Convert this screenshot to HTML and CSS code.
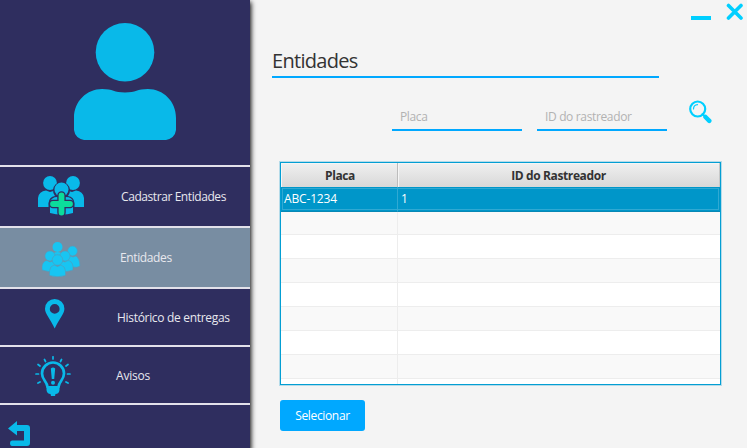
FILE: index.html
```html
<!DOCTYPE html>
<html lang="pt-BR">
<head>
<meta charset="utf-8">
<title>Entidades</title>
<link rel="stylesheet" href="styles.css">
</head>
<body>
<div class="app">
  <aside class="sidebar">
    <div class="profile">
      <svg width="102" height="118" viewBox="0 0 102 118"><circle cx="51" cy="29.3" r="29.3"/><path d="M0 95C0 78 13 66 28 66C39 66 40 69.500 51 69.500C62 69.500 63 66 74 66C89 66 102 78 102 95V107Q101 115 92 117H10Q1 115 0 107Z"/></svg>
    </div>
    <nav class="menu">
      <a class="item add">
        <svg class="icon" width="48" height="40" viewBox="0 0 48 40">
          <circle cx="12" cy="7" r="6.900"/><circle cx="35" cy="7" r="6.900"/>
          <path d="M0 31V22Q1 15 8 14.500L12 16L17 14.500L20 31ZM46 31V22Q45 15 38 14.500L34 16L29 14.500L26 31Z"/>
          <path class="cut" d="M10.500 40V27Q11 21 17 20A8.500 8.500 0 1 1 30 20Q36 21 36.500 27V40Z"/>
          <circle cx="23.500" cy="13.500" r="7"/>
          <path d="M12 32V26Q14 21 19 21L23.500 23L28 21Q34 21 35 26V32L35 37Q24 40 12 37Z"/>
          <path class="cutline" d="M23.500 19.500V36.500M15 28H32"/>
          <path class="plus" d="M23.500 19.500V36.500M15 28H32"/>
        </svg><span>Cadastrar Entidades</span>
      </a>
      <a class="item people">
        <svg class="icon" width="39" height="35" viewBox="0 0 39 35">
          <circle cx="15.500" cy="5" r="5"/><path d="M10 12Q15.500 8 21 12V18H10Z"/>
          <g class="edge"><circle cx="30.500" cy="9" r="4.900"/><path d="M23 25V18Q24 14 28 14L31 15L34 14Q37.500 16 38 24Q35 26 31 25Z"/>
          <circle cx="8" cy="14" r="5.100"/><circle cx="23" cy="14" r="5.100"/>
          <path d="M0 28V24Q1 19 5 18.500L8 20L12 18.500L16 29Q8 31 0 28ZM31 28V24Q30 19 26 18.500L23 20L19 18.500L16 29Q24 31 31 28Z"/>
          <circle cx="15.500" cy="18" r="5.300"/><path d="M7.500 33.500V29Q8 24 12 23L15.500 24.500L19 23Q23 24 23.500 29V33.500Q15.500 36 7.500 33.500Z"/></g>
        </svg><span>Entidades</span>
      </a>
      <a class="item history">
        <svg class="icon" width="20" height="30" viewBox="0 0 20 30"><path fill-rule="evenodd" d="M9.700 0A9.700 9.700 0 0 1 19.400 9.700C19.400 15 14 20 9.700 29.500C5.500 20 0 15 0 9.700A9.700 9.700 0 0 1 9.700 0ZM9.700 5A4.900 4.900 0 1 0 9.700 14.800A4.900 4.900 0 1 0 9.700 5Z"/></svg><span>Histórico de entregas</span>
      </a>
      <a class="item alerts">
        <svg class="icon" width="36" height="40" viewBox="0 0 36 40">
          <path class="stroke bulb" d="M12.500 31C12 25 7 24 7 17.500A11 11 0 0 1 29 17.500C29 24 24 25 23.500 31"/>
          <path d="M11.500 30H24.500V34Q24 38 20.500 38L20 40H16L15.500 38Q12 38 11.500 34ZM15.800 12.500Q18 10.500 20.200 12.500L19.200 23H16.800Z"/><circle cx="18" cy="26.800" r="2"/>
          <path class="stroke ray" d="M18 0.800V3M9.500 3.500L10.500 5.500M26.500 3.500L25.500 5.500M3 8.500L5 10M33 8.500L31 10M1 18H3.500M32.500 18H35M3 27L5 26M33 27L31 26"/>
        </svg><span>Avisos</span>
      </a>
    </nav>
    <svg class="back" width="23" height="26" viewBox="0 0 23 26"><path d="M0 7.500L9 0V4H19Q22 4 22 7V22Q22 25 19 25H4Q2 25 2 22Q2 19.500 4 19.500H16V10H9V14.500Z"/></svg>
  </aside>
  <main class="content">
    <div class="window-controls">
      <i class="minimize"></i>
      <svg width="17" height="17" viewBox="0 0 17 17"><path d="M2.500 2.500L15 15M15 2.500L2.500 15"/></svg>
    </div>
    <h1>Entidades</h1>
    <form class="filters">
      <input class="plate" type="text" placeholder="Placa">
      <input class="tracker" type="text" placeholder="ID do rastreador">
      <svg class="search" width="23" height="24" viewBox="0 0 23 24"><circle cx="8.700" cy="9" r="7.500"/><path class="glare" d="M4.500 9Q4.500 5 8.500 4.700"/><path class="neck" d="M13.500 14L16 16.500"/><path class="handle" d="M16.500 17L20.300 20.800"/></svg>
    </form>
    <div class="table">
      <div class="row head"><div>Placa</div><div>ID do Rastreador</div></div>
      <div class="row selected"><div>ABC-1234</div><div>1</div></div>
      <div class="row"><div></div><div></div></div>
      <div class="row"><div></div><div></div></div>
      <div class="row"><div></div><div></div></div>
      <div class="row"><div></div><div></div></div>
      <div class="row"><div></div><div></div></div>
      <div class="row"><div></div><div></div></div>
      <div class="row"><div></div><div></div></div>
      <div class="row"><div></div><div></div></div>
    </div>
    <button type="button">Selecionar</button>
  </main>
</div>
</body>
</html>
```
FILE: styles.css
```css
* { box-sizing: border-box; }
body {
  margin: 0;
  background: #f4f4f4;
  color: #333;
  font: 12px/16px "Open Sans", "Noto Sans", sans-serif;
  letter-spacing: -0.38px;
}
svg { display: block; flex: none; }
.app { display: flex; width: 747px; height: 448px; overflow: hidden; }
.sidebar {
  width: 250px;
  flex: none;
  background: #2f2e5f;
  box-shadow: 0 3px 5px 1px #000;
  fill: #09b9e9;
}
.profile { height: 165px; padding: 23px 0 0 74px; }
.menu { border-top: 2px solid #e2e1ea; }
.item {
  display: flex;
  height: 58px;
  border-bottom: 2px solid #e2e1ea;
  color: #e8e8ee;
  white-space: nowrap;
}
.add { height: 61px; padding: 9px 0 0 38px; }
.add span { margin: 13px 0 0 35px; letter-spacing: -0.42px; }
.people { height: 61px; padding: 14px 0 0 42px; background: #788da2; fill: #18c5f2; }
.people span { margin: 8px 0 0 39px; }
.history { padding: 10px 0 0 45px; }
.history span { margin: 11px 0 0 52px; letter-spacing: -0.31px; }
.alerts { padding: 9px 0 0 35px; }
.alerts span { margin: 12px 0 0 45px; letter-spacing: -0.2px; }
.cut { fill: #2f2e5f; }
.cutline { stroke: #2f2e5f; stroke-width: 8.5; stroke-linecap: round; }
.plus { stroke: #0cdc9b; stroke-width: 5.8; stroke-linecap: round; }
.edge { stroke: #5998b7; stroke-width: .6; }
.stroke { fill: none; stroke: #09b9e9; stroke-linecap: round; }
.bulb { stroke-width: 2.7; }
.ray { stroke-width: 1.7; }
.back { margin: 16px 0 0 8px; }
.content { flex: 1; min-width: 0; padding: 3px 0 0 22px; }
.window-controls { display: flex; justify-content: flex-end; gap: 15px; padding-right: 4px; height: 43px; }
.minimize { width: 20px; height: 4px; margin-top: 13px; background: #00cfff; }
.window-controls svg { fill: none; stroke: #00cfff; stroke-width: 3.6; stroke-linecap: round; }
h1 {
  width: 387px;
  height: 32px;
  margin: 0;
  border-bottom: 2px solid #00a8ff;
  font-size: 20px;
  font-weight: 400;
  line-height: 30px;
  letter-spacing: -0.7px;
}
.filters { display: flex; padding: 22px 0 0 120px; height: 84px; }
.filters input {
  width: 130px;
  height: 31px;
  margin-right: 15px;
  padding: 3px 8px 0;
  border: 0;
  border-bottom: 2px solid #00a8ff;
  border-radius: 0;
  background: none;
  font: inherit;
  letter-spacing: -0.35px;
}
.filters input::placeholder { color: #b2b2b2; opacity: 1; }
.search { margin-left: 7px; fill: none; stroke: #00cfff; stroke-width: 2.2; stroke-linecap: round; }
.glare { stroke-width: 1.2; }
.neck { stroke-width: 2; }
.handle { stroke-width: 4.5; }
.table {
  width: 441px;
  height: 223px;
  margin-left: 8px;
  overflow: hidden;
  border: 1px solid #039ed3;
  box-shadow: 0 0 0 1px #b5dbe9;
  background: #fff;
}
.row { display: grid; grid-template-columns: 117px 1fr; height: 24px; }
.row > div { padding: 4px 3px; line-height: 16px; border-right: 1px solid #ededed; border-bottom: 1px solid #ededed; }
.row > div:last-child { border-right: 0; }
.row:nth-child(odd) { background: #f9f9f9; }
.row.head { background: linear-gradient(#f0f0f0, #d8d8d8); font-weight: 700; text-align: center; }
.row.head > div { padding-top: 5px; border-color: #bcbcbc; box-shadow: inset 1px 1px #f5f5f5; }
.row.head > div:first-child { padding-left: 5px; }
.row.head > div:last-child { border-right: 1px solid #c8c8c8; }
.row.selected { background: #0096c9; color: #fff; position: relative; letter-spacing: -0.15px; }
.row.selected > div { border-color: #0788b5; }
.row.selected > div:first-child { border-right-color: #30a9d3; }
.row.selected::after { content: ""; position: absolute; inset: 1px; border: 1px solid #30a9d3; }
button {
  display: block;
  width: 85px;
  height: 31px;
  margin: 15px 0 0 8px;
  padding: 0;
  border: 0;
  border-radius: 3px;
  background: #00a8ff;
  color: #fff;
  font: inherit;
  letter-spacing: -0.35px;
}
```
